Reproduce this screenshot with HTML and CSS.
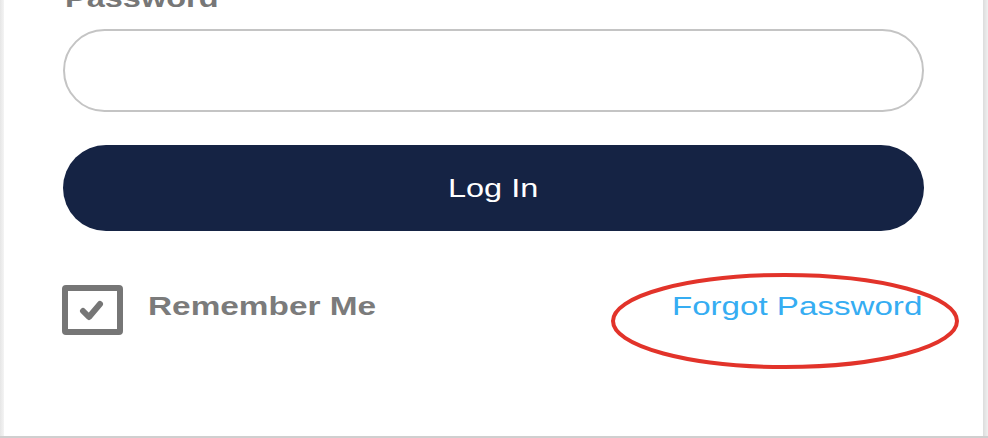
FILE: index.html
```html
<!DOCTYPE html>
<html lang="en">
<head>
<meta charset="utf-8">
<title>Log In</title>
<link rel="stylesheet" href="styles.css">
</head>
<body>
<div class="frame">
  <div class="card">
    <label class="field-label" for="pw"><span class="wide">Password</span></label>
    <input id="pw" class="input" type="password">
    <button class="btn" type="button"><span class="wide wide-c">Log In</span></button>
    <div class="row">
      <div class="remember">
        <span class="checkbox">
          <svg width="26" height="22" viewBox="0 0 26 22"><path d="M5 12 L11 18 L22 5" fill="none" stroke="#767676" stroke-width="6" stroke-linecap="round" stroke-linejoin="round"/></svg>
        </span>
        <span class="remember-text wide">Remember Me</span>
      </div>
      <a class="forgot" href="#"><span class="wide wide-r">Forgot Password</span></a>
    </div>
    <svg class="annot" width="360" height="106" viewBox="0 0 360 106"><ellipse cx="180" cy="53" rx="172" ry="46" fill="none" stroke="#e2332a" stroke-width="4"/></svg>
  </div>
</div>
</body>
</html>
```
FILE: styles.css
```css
html, body {
  margin: 0;
  padding: 0;
}
body {
  width: 988px;
  height: 438px;
  overflow: hidden;
  background: #cfcfcf;
  font-family: "Liberation Sans", Arial, sans-serif;
}
.frame {
  height: 436px;
  display: flex;
  background: linear-gradient(to right, #e6e6e6 0, #f4f4f4 4px, transparent 4px, transparent 983px, #dcdcdc 983px, #f0f0f0 988px);
}
.card {
  position: relative;
  margin-left: 4px;
  width: 979px;
  height: 436px;
  background: #fff;
  box-sizing: border-box;
  padding: 0 59px;
  display: flex;
  flex-direction: column;
}
.wide {
  display: inline-block;
  transform: scaleX(1.25);
  transform-origin: left center;
  white-space: nowrap;
}
.wide-c { transform-origin: center center; }
.wide-r { transform-origin: right center; }
.field-label {
  display: block;
  margin-top: -17px;
  margin-left: 2px;
  height: 30px;
  line-height: 30px;
  font-size: 26px;
  font-weight: 700;
  color: #777;
}
.input {
  margin-top: 16px;
  height: 83px;
  width: 100%;
  box-sizing: border-box;
  border: 2px solid #c4c4c4;
  border-radius: 42px;
  background: #fff;
  outline: none;
}
.btn {
  margin-top: 33px;
  height: 86px;
  width: 100%;
  border: none;
  border-radius: 43px;
  background: #152344;
  color: #fff;
  font-family: "Liberation Sans", Arial, sans-serif;
  font-size: 26px;
  display: flex;
  align-items: center;
  justify-content: center;
  padding: 0;
}
.row {
  margin-top: 54px;
  display: flex;
  justify-content: space-between;
  align-items: flex-start;
}
.remember {
  display: flex;
  align-items: flex-start;
  margin-left: -1px;
}
.checkbox {
  width: 61px;
  height: 50px;
  box-sizing: border-box;
  border: 6.5px solid #767676;
  border-radius: 4px;
  display: flex;
  align-items: center;
  justify-content: center;
}
.checkbox svg { margin-top: 0; margin-left: -4px; }
.remember-text {
  margin-left: 25px;
  margin-top: 6px;
  line-height: 30px;
  font-size: 26.7px;
  font-weight: 700;
  color: #7b7b7b;
}
.forgot {
  margin-top: 6px;
  margin-right: 2px;
  line-height: 30px;
  font-size: 26.5px;
  color: #36adf2;
  text-decoration: none;
}
.annot {
  position: absolute;
  left: 601px;
  top: 268px;
}
```
